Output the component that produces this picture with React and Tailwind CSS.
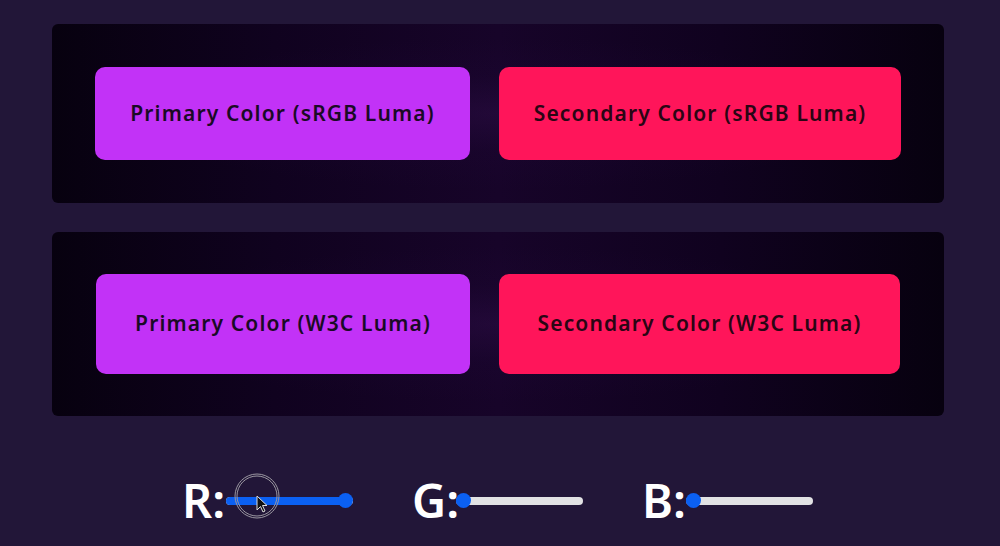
import React from "react";

const font = { fontFamily: '"Noto Sans", "DejaVu Sans", sans-serif' };

function Panel({ h, btnH, label, pw, sw }) {
  return (
    <div
      className={`relative ml-[52px] w-[892px] rounded-[6px] overflow-hidden bg-[linear-gradient(90deg,#07010f_0%,#10021f_25%,#170429_50%,#10021f_75%,#07010f_100%)] ${h}`}
    >
      <div className="absolute inset-0 bg-[radial-gradient(ellipse_at_center,rgba(60,20,90,0.3)_0%,rgba(40,10,70,0.12)_30%,rgba(0,0,0,0)_60%)]" />
      <div className="relative flex h-full items-center justify-center gap-[29px]">
        <button
          className={`${pw} ${btnH} rounded-[10px] bg-[#c232f7] text-[#1a0a26] text-[21px] font-semibold tracking-[0.055em]`}
          style={font}
        >
          Primary Color ({label} Luma)
        </button>
        <button
          className={`${sw} ${btnH} rounded-[10px] bg-[#ff155a] text-[#2a0514] text-[21px] font-semibold tracking-[0.055em]`}
          style={font}
        >
          Secondary Color ({label} Luma)
        </button>
      </div>
    </div>
  );
}

function Slider({ letter, value }) {
  return (
    <div className="flex items-center">
      <span className="text-white text-[47px] font-semibold leading-none w-[44px]" style={font}>
        {letter}:
      </span>
      <div className="relative w-[127px] h-[15px] flex items-center">
        <div className="absolute left-0 right-0 h-[8px] rounded-full bg-[#e2e2e4]" />
        <div
          className="absolute left-0 h-[8px] rounded-full bg-[#0b60f2]"
          style={{ width: `${value * 112 + 7.5}px` }}
        />
        <div
          className="absolute top-0 w-[15px] h-[15px] rounded-full bg-[#0b60f2]"
          style={{ left: `${value * 112}px` }}
        />
      </div>
    </div>
  );
}

export default function App() {
  return (
    <div className="w-[1000px] h-[546px] bg-[#221638] overflow-hidden relative">
      <div className="pt-[24px]">
        <Panel h="h-[179px]" btnH="h-[93px]" label="sRGB" pw="w-[375px]" sw="w-[402px]" />
        <div className="h-[29px]" />
        <Panel h="h-[184px]" btnH="h-[100px]" label="W3C" pw="w-[374px]" sw="w-[401px]" />
      </div>
      <div className="flex justify-center gap-[59px] mt-[61px] pr-[5px]">
        <Slider letter="R" value={1} />
        <Slider letter="G" value={0} />
        <Slider letter="B" value={0} />
      </div>
      <svg className="absolute left-[233px] top-[472px]" width="48" height="48" viewBox="0 0 48 48">
        <circle cx="24" cy="24" r="22" fill="none" stroke="#9a96a0" strokeWidth="1" />
        <circle cx="24" cy="24" r="20" fill="none" stroke="#9a96a0" strokeWidth="1" />
        <path
          d="M24 24 L24 38 L27.5 34.5 L30 40 L32 39 L29.5 33.5 L34 33.5 Z"
          fill="#111"
          stroke="#ddd"
          strokeWidth="1"
          strokeLinejoin="round"
        />
      </svg>
    </div>
  );
}
